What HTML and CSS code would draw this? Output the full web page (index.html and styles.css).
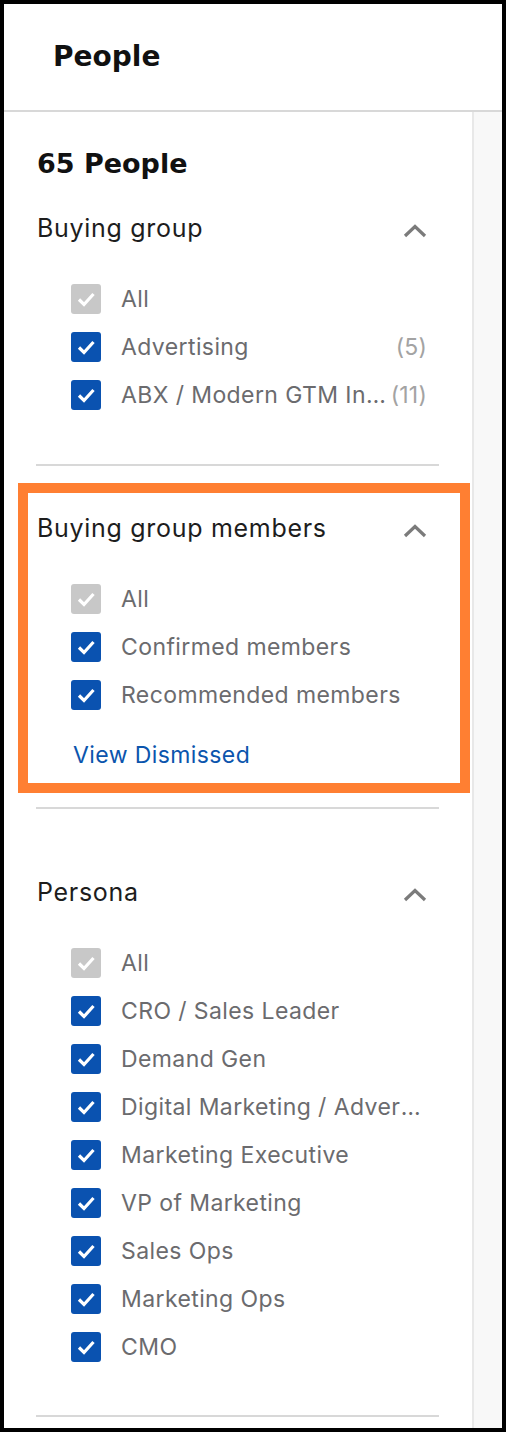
FILE: index.html
```html
<!DOCTYPE html>
<html lang="en">
<head>
<meta charset="utf-8">
<title>People</title>
<link rel="stylesheet" href="styles.css">
</head>
<body>
<div class="frame">
  <header class="page-header">
    <h1 class="page-title">People</h1>
  </header>
  <div class="panel">
    <div class="filters">
      <h2 class="count-title">65 People</h2>

      <section class="group group-first">
        <div class="group-head">
          <span class="group-name">Buying group</span>
          <svg class="chevron" viewBox="0 0 24 14" width="24" height="14"><path d="M2 12 L12 2.5 L22 12" fill="none" stroke="#7b7b7b" stroke-width="3.2"/></svg>
        </div>
        <ul class="options">
          <li class="option"><span class="box box-muted"><svg viewBox="0 0 30 30"><path d="M8 15.5 L13 20.5 L22.5 10" fill="none" stroke="#fff" stroke-width="3.2"/></svg></span><span class="label">All</span></li>
          <li class="option"><span class="box"><svg viewBox="0 0 30 30"><path d="M8 15.5 L13 20.5 L22.5 10" fill="none" stroke="#fff" stroke-width="3.2"/></svg></span><span class="label">Advertising</span><span class="count">(5)</span></li>
          <li class="option"><span class="box"><svg viewBox="0 0 30 30"><path d="M8 15.5 L13 20.5 L22.5 10" fill="none" stroke="#fff" stroke-width="3.2"/></svg></span><span class="label">ABX / Modern GTM Initiative</span><span class="count">(11)</span></li>
        </ul>
      </section>

      <section class="group group-highlight">
        <div class="group-head">
          <span class="group-name">Buying group members</span>
          <svg class="chevron" viewBox="0 0 24 14" width="24" height="14"><path d="M2 12 L12 2.5 L22 12" fill="none" stroke="#7b7b7b" stroke-width="3.2"/></svg>
        </div>
        <ul class="options">
          <li class="option"><span class="box box-muted"><svg viewBox="0 0 30 30"><path d="M8 15.5 L13 20.5 L22.5 10" fill="none" stroke="#fff" stroke-width="3.2"/></svg></span><span class="label">All</span></li>
          <li class="option"><span class="box"><svg viewBox="0 0 30 30"><path d="M8 15.5 L13 20.5 L22.5 10" fill="none" stroke="#fff" stroke-width="3.2"/></svg></span><span class="label">Confirmed members</span></li>
          <li class="option"><span class="box"><svg viewBox="0 0 30 30"><path d="M8 15.5 L13 20.5 L22.5 10" fill="none" stroke="#fff" stroke-width="3.2"/></svg></span><span class="label">Recommended members</span></li>
        </ul>
        <a class="link" href="#">View Dismissed</a>
      </section>

      <section class="group group-persona">
        <div class="group-head">
          <span class="group-name">Persona</span>
          <svg class="chevron" viewBox="0 0 24 14" width="24" height="14"><path d="M2 12 L12 2.5 L22 12" fill="none" stroke="#7b7b7b" stroke-width="3.2"/></svg>
        </div>
        <ul class="options">
          <li class="option"><span class="box box-muted"><svg viewBox="0 0 30 30"><path d="M8 15.5 L13 20.5 L22.5 10" fill="none" stroke="#fff" stroke-width="3.2"/></svg></span><span class="label">All</span></li>
          <li class="option"><span class="box"><svg viewBox="0 0 30 30"><path d="M8 15.5 L13 20.5 L22.5 10" fill="none" stroke="#fff" stroke-width="3.2"/></svg></span><span class="label">CRO / Sales Leader</span></li>
          <li class="option"><span class="box"><svg viewBox="0 0 30 30"><path d="M8 15.5 L13 20.5 L22.5 10" fill="none" stroke="#fff" stroke-width="3.2"/></svg></span><span class="label">Demand Gen</span></li>
          <li class="option"><span class="box"><svg viewBox="0 0 30 30"><path d="M8 15.5 L13 20.5 L22.5 10" fill="none" stroke="#fff" stroke-width="3.2"/></svg></span><span class="label">Digital Marketing / Advertising</span></li>
          <li class="option"><span class="box"><svg viewBox="0 0 30 30"><path d="M8 15.5 L13 20.5 L22.5 10" fill="none" stroke="#fff" stroke-width="3.2"/></svg></span><span class="label">Marketing Executive</span></li>
          <li class="option"><span class="box"><svg viewBox="0 0 30 30"><path d="M8 15.5 L13 20.5 L22.5 10" fill="none" stroke="#fff" stroke-width="3.2"/></svg></span><span class="label">VP of Marketing</span></li>
          <li class="option"><span class="box"><svg viewBox="0 0 30 30"><path d="M8 15.5 L13 20.5 L22.5 10" fill="none" stroke="#fff" stroke-width="3.2"/></svg></span><span class="label">Sales Ops</span></li>
          <li class="option"><span class="box"><svg viewBox="0 0 30 30"><path d="M8 15.5 L13 20.5 L22.5 10" fill="none" stroke="#fff" stroke-width="3.2"/></svg></span><span class="label">Marketing Ops</span></li>
          <li class="option"><span class="box"><svg viewBox="0 0 30 30"><path d="M8 15.5 L13 20.5 L22.5 10" fill="none" stroke="#fff" stroke-width="3.2"/></svg></span><span class="label">CMO</span></li>
        </ul>
      </section>
    </div>
    <div class="scrollbar"></div>
  </div>
</div>
</body>
</html>
```

FILE: styles.css
```css
*, *::before, *::after { box-sizing: border-box; }

html, body {
  margin: 0;
  padding: 0;
  background: #000;
}

.frame {
  width: 506px;
  height: 1432px;
  border: 4px solid #000;
  background: #fff;
  overflow: hidden;
  display: flex;
  flex-direction: column;
  font-family: Inter, "Liberation Sans", sans-serif;
}

.page-header {
  height: 108px;
  border-bottom: 2px solid #d8d8d8;
  padding-left: 49px;
  display: flex;
  align-items: center;
  flex-shrink: 0;
}

.page-title {
  margin: 0;
  font-family: "DejaVu Sans", sans-serif;
  font-weight: 700;
  font-size: 28px;
  line-height: 32px;
  color: #111;
}

.panel {
  flex: 1;
  display: flex;
  min-height: 0;
}

.filters {
  flex: 1;
  min-width: 0;
  padding: 36px 33px 0 32px;
}

.scrollbar {
  width: 30px;
  flex-shrink: 0;
  background: #f8f8f8;
  border-left: 2px solid #e8e8e8;
}

.count-title {
  margin: 0;
  font-family: "DejaVu Sans", sans-serif;
  font-weight: 700;
  font-size: 27px;
  line-height: 32px;
  color: #111;
  padding-left: 1px;
}

.group {
  border-bottom: 2px solid #d8d8d8;
  position: relative;
}

.group-first { padding: 32px 0 45px; }
.group-highlight { padding: 46px 0 36px; }
.group-persona { padding: 67px 0 44px; }

.group-highlight::before {
  content: "";
  position: absolute;
  left: -18px;
  top: 17px;
  width: 452px;
  height: 310px;
  border: 10px solid #ff7f32;
  pointer-events: none;
}

.group-head {
  display: flex;
  align-items: center;
  justify-content: space-between;
  height: 32px;
  padding-right: 12px;
  padding-left: 1px;
}

.group-name {
  font-size: 25px;
  color: #1d1d1d;
  letter-spacing: 0.7px;
}

.chevron {
  display: block;
  margin-top: 6px;
}

.options {
  list-style: none;
  margin: 31px 0 0;
  padding: 0 12px 0 35px;
}

.option {
  display: flex;
  align-items: center;
  height: 48px;
}

.box {
  width: 30px;
  height: 30px;
  border-radius: 3px;
  background: #0a52b0;
  flex-shrink: 0;
  margin-right: 20px;
}

.box svg {
  display: block;
  width: 30px;
  height: 30px;
}

.box-muted {
  background: #c8c8c8;
}

.label {
  flex: 1;
  min-width: 0;
  font-size: 23px;
  color: #6b6b6e;
  white-space: nowrap;
  overflow: hidden;
  text-overflow: ellipsis;
  letter-spacing: 0.4px;
}

.count {
  flex-shrink: 0;
  font-size: 23px;
  color: #a3a3a3;
  letter-spacing: 0.2px;
}

.link {
  display: block;
  margin: 20px 0 0 37px;
  font-size: 23px;
  line-height: 32px;
  color: #0b55ad;
  text-decoration: none;
  letter-spacing: 0.4px;
}
```
